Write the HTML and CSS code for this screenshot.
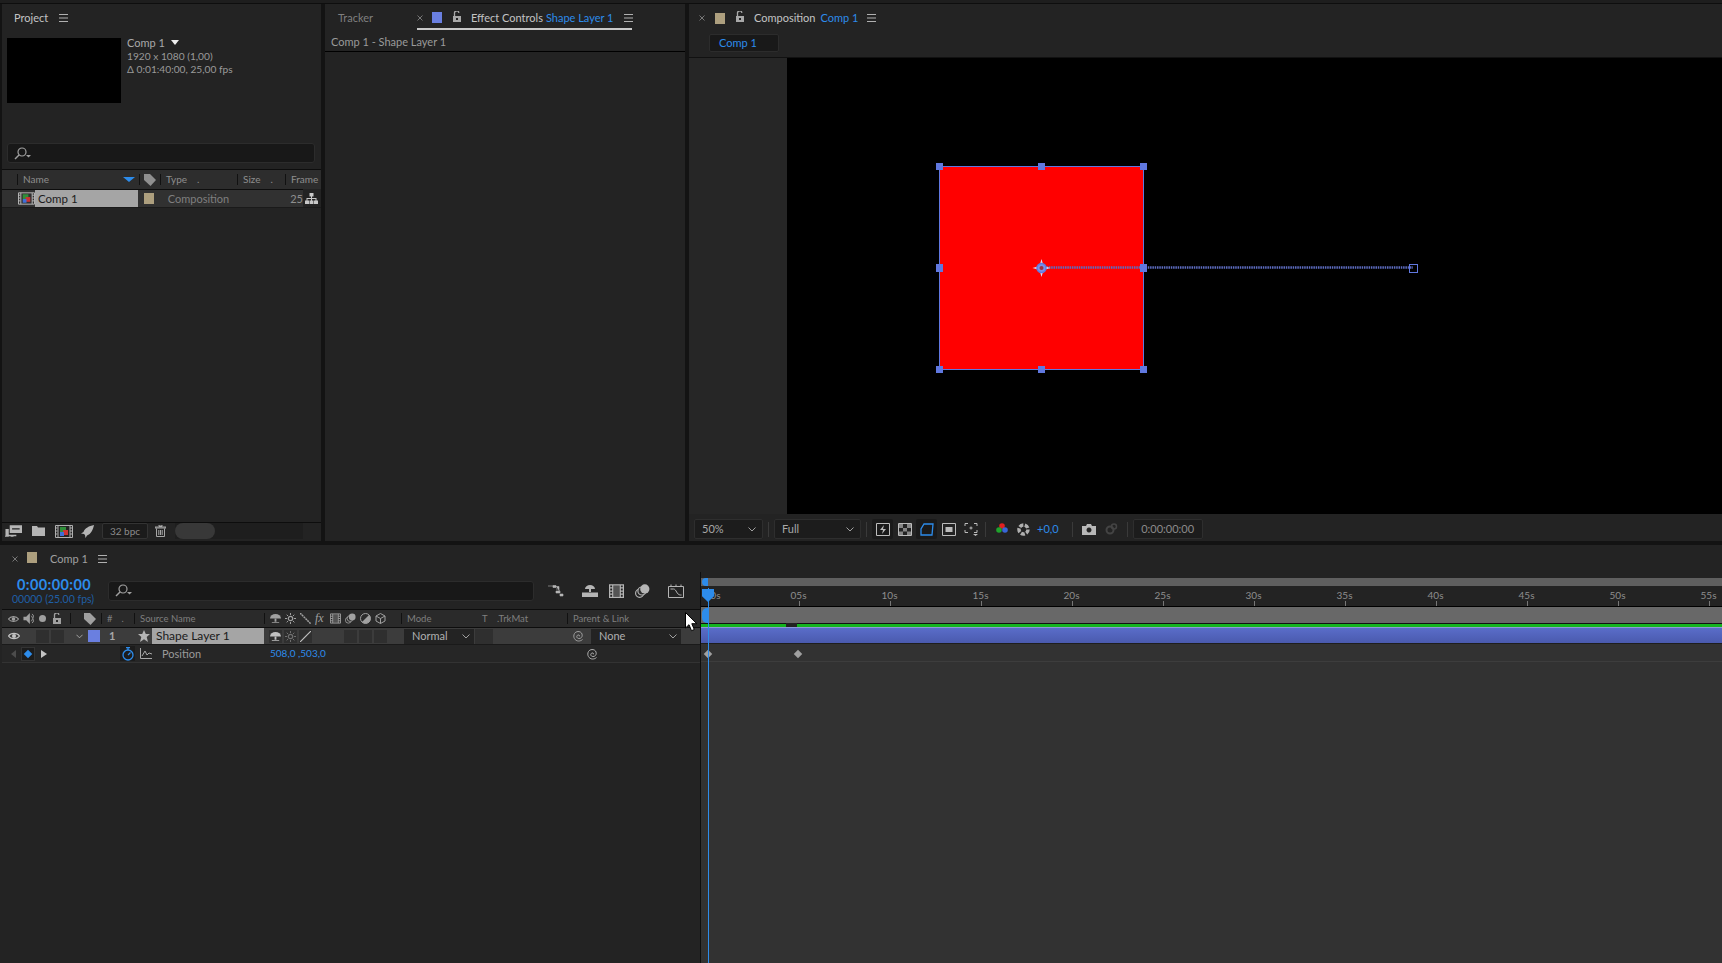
FILE: index.html
```html
<!DOCTYPE html>
<html lang="en">

<head>
  <meta charset="UTF-8" />
  <title>After Effects</title>
  <link rel="stylesheet" href="styles.css">
</head>

<body>
  <svg class="defs">
    <symbol id="i-menu" viewBox="0 0 9 8"><path d="M0 .5h9M0 4h9M0 7.5h9" stroke="currentColor" fill="none" /></symbol>
    <symbol id="i-close" viewBox="0 0 6 6"><path d="M.5.5l5 5M5.5.5l-5 5" stroke="currentColor" fill="none" /></symbol>
    <symbol id="i-lock" viewBox="0 0 10 11"><path d="M1 5h8v6H1z M4 7v2h2V7z" fill="currentColor" fill-rule="evenodd" /><path d="M2.5 5V2.5a2.2 2.2 0 0 1 4.4-.6" stroke="currentColor" stroke-width="1.3" fill="none" /></symbol>
    <symbol id="i-search" viewBox="0 0 18 13"><circle cx="8" cy="5" r="4" stroke="currentColor" fill="none" stroke-width="1.2" /><path d="M5 8l-4 4" stroke="currentColor" stroke-width="1.4" /><path d="M12 8h5l-2.500 2.500z" fill="currentColor" /></symbol>
    <symbol id="i-chev" viewBox="0 0 8 5"><path d="M.5.5L4 4 7.500.5" stroke="currentColor" fill="none" /></symbol>
    <symbol id="i-spiral" viewBox="0 0 12 12"><path d="M6 6.500c1-.5 .5-2-1-1.500-2 .7-1.500 3.500 1 3.500 3 0 4-3 2.500-5.500C7 1 3 1 1.500 3.500-.5 7 2 11 5.500 11c1.500 0 3-.5 4-1.500" stroke="currentColor" fill="none" /></symbol>
    <symbol id="i-comp" viewBox="0 0 18 13"><path d="M.5.500h17v12H.5z M3 .5v12M15 .5v12" stroke="currentColor" fill="none" /><path d="M.5 3h2M.5 6h2M.5 9h2M15 3h2M15 6h2M15 9h2" stroke="currentColor" /><rect x="5" y="2" width="6" height="5" fill="#2f8f3a" /><rect x="8" y="5" width="5" height="5" fill="#c33" /><rect x="5" y="7" width="4" height="4" fill="#3f6fd8" /></symbol>
    <symbol id="i-eye" viewBox="0 0 12 8"><path d="M.5 4C3 .5 9 .5 11.500 4 9 7.500 3 7.500 .5 4z" stroke="currentColor" fill="none" stroke-width="1.200" /><circle cx="6" cy="4" r="2" fill="currentColor" /></symbol>
    <symbol id="i-shy" viewBox="0 0 12 11"><path d="M0 5.500a6 5 0 0 1 12 0z" fill="currentColor" /><path d="M5 5.500h2V9H5z M2 9.500h8v1H2z" fill="currentColor" /></symbol>
    <symbol id="i-sun" viewBox="0 0 11 11"><circle cx="5.500" cy="5.500" r="2.200" stroke="currentColor" fill="none" stroke-width="1.200" /><path d="M5.500 0v2M5.500 9v2M0 5.500h2M9 5.500h2M1.700 1.700l1.400 1.400M8 8l1.400 1.400M9.300 1.700L8 3M3 8l-1.300 1.400" stroke="currentColor" /></symbol>
    <symbol id="i-film" viewBox="0 0 12 11"><path d="M.5.500h11v10H.5z M3 .5v10M9 .5v10M.5 3H3M.5 5.500H3M.5 8H3M9 3h2.500M9 5.500h2.500M9 8h2.500" stroke="currentColor" fill="none" /><rect x="3.500" y="1" width="5" height="9" fill="currentColor" opacity=".35" /></symbol>
    <symbol id="i-discs" viewBox="0 0 13 12"><circle cx="4" cy="8" r="3.500" stroke="currentColor" fill="none" /><circle cx="6" cy="6" r="3.500" stroke="currentColor" fill="#2a2a2a" /><circle cx="8.500" cy="4.200" r="4" fill="currentColor" /></symbol>
  </svg>

  <div class="top-strip"></div>

  <div class="upper">
    <section class="panel project">
      <div class="tabs project-tabs">
        <span class="lit">Project</span>
        <svg class="ico menu"><use href="#i-menu" /></svg>
      </div>
      <div class="proj-info">
        <div class="thumb"></div>
        <div class="meta">
          <div class="meta-name">Comp 1 <span class="meta-caret"></span></div>
          <div>1920 x 1080 (1,00)</div>
          <div>Δ 0:01:40:00, 25,00 fps</div>
        </div>
      </div>
      <div class="search proj-search"><svg class="ico s-ico"><use href="#i-search" /></svg></div>
      <div class="proj-cols">
        <span class="cell c-lead"></span>
        <span class="cell c-name">Name<span class="sort"></span></span>
        <span class="cell c-tag">
          <svg class="tag" viewBox="0 0 12 12"><path d="M0 0h6l6 6-5.500 6L0 6z" fill="currentColor" /></svg>
        </span>
        <span class="cell c-type">Type<i>.</i></span>
        <span class="cell c-size">Size<i>.</i></span>
        <span class="cell c-frame">Frame</span>
      </div>
      <div class="proj-row">
        <div class="proj-row-main">
          <svg class="ico row-comp"><use href="#i-comp" /></svg>
          <span class="row-name">Comp 1</span>
          <span class="swatch tan row-swatch"></span>
          <span class="row-type">Composition</span>
          <span class="row-rate">25</span>
        </div>
        <svg class="row-tree" viewBox="0 0 13 11"><path d="M4.500 0h4v3.500h-4zM0 7.500h4V11H0zM4.500 7.500h4V11h-4zM9 7.500h4V11H9zM6 3.500h1V5h4.500v2.500h-1V6h-3.500v1.500H6V6H2.500v1.500h-1V5H6z" fill="#c8c8c8" /></svg>
      </div>
      <div class="grow"></div>
      <div class="proj-foot">
        <svg class="foot-ico f-interp" viewBox="0 0 18 12"><path d="M5 0h13v8H5z M7.500 3v1.500h8V3z" fill="currentColor" fill-rule="evenodd" /><path d="M.5 4H4v6h8v1.500H.5z M0 11h4v1H0zM6 11h3v1H6z" fill="currentColor" /></svg>
        <svg class="foot-ico f-folder" viewBox="0 0 13 10"><path d="M0 0h5l1 1.500h7V10H0z" fill="currentColor" /></svg>
        <svg class="ico f-comp"><use href="#i-comp" /></svg>
        <svg class="foot-ico f-rocket" viewBox="0 0 13 13"><path d="M13 0C8 1 4 3 2.500 7L0 8.500l3 .5 1 1 .5 3L6 10.500C10 9 12 5 13 0z" fill="currentColor" /></svg>
        <span class="bpc">32 bpc</span>
        <svg class="foot-ico f-trash" viewBox="0 0 11 12"><path d="M0 2h11v1H0zM4 0h3v1.500H4zM1.500 3.500v8h8v-8M3.800 5v5M5.500 5v5M7.200 5v5" stroke="currentColor" stroke-width=".9" fill="none" /></svg>
        <div class="foot-track"><span class="pill"></span></div>
      </div>
    </section>

    <section class="panel effects">
      <div class="tabs fx-tabs">
        <span class="dim tracker">Tracker</span>
        <div class="fx-active">
          <svg class="ico close"><use href="#i-close" /></svg>
          <span class="swatch blue"></span>
          <svg class="ico lock"><use href="#i-lock" /></svg>
          <span class="lit tab-title">Effect Controls</span>
          <span class="link">Shape Layer 1</span>
          <svg class="ico menu"><use href="#i-menu" /></svg>
        </div>
      </div>
      <div class="fx-sub">Comp 1 - Shape Layer 1</div>
    </section>

    <section class="panel comp">
      <div class="tabs comp-tabs">
        <svg class="ico close"><use href="#i-close" /></svg>
        <span class="swatch tan"></span>
        <svg class="ico lock"><use href="#i-lock" /></svg>
        <span class="lit tab-title">Composition</span>
        <span class="link">Comp 1</span>
        <svg class="ico menu"><use href="#i-menu" /></svg>
      </div>
      <div class="comp-subtabs"><span class="comp-subtab link">Comp 1</span></div>
      <div class="viewer-wrap">
        <div class="viewer">
          <svg class="stage" width="935" height="456" viewBox="787 58 935 456">
            <rect x="939.500" y="166.500" width="204" height="203" fill="#ff0000" stroke="#6078e0" />
            <path d="M1042 267.500h371" stroke="#5d6cc0" stroke-width="2.500" stroke-dasharray="1.500 .8" />
            <rect x="1409.500" y="264.500" width="8" height="8" fill="none" stroke="#6078e0" />
            <g fill="#6078e0">
              <rect x="936" y="163" width="7" height="7" /><rect x="1038" y="163" width="7" height="7" /><rect x="1140" y="163" width="7" height="7" />
              <rect x="936" y="264" width="7" height="8" /><rect x="1140" y="264" width="7" height="8" />
              <rect x="936" y="366" width="7" height="7" /><rect x="1038" y="366" width="7" height="7" /><rect x="1140" y="366" width="7" height="7" />
            </g>
            <g fill="none">
              <path d="M1041.500 259l2 7 7 2-7 2-2 7-2-7-7-2 7-2z" fill="#d8dcf5" />
              <circle cx="1041.500" cy="268" r="4.500" fill="#7d8fe8" stroke="#6078e0" stroke-width="1.500" />
              <circle cx="1041.500" cy="268" r="2" fill="#a03040" />
            </g>
          </svg>
        </div>
      </div>
      <div class="comp-toolbar">
        <div class="drop zoom-drop"><span>50%</span><svg class="ico chev"><use href="#i-chev" /></svg></div>
        <span class="tb-sep"></span>
        <div class="drop res-drop"><span>Full</span><svg class="ico chev"><use href="#i-chev" /></svg></div>
        <span class="tb-sep"></span>
        <span class="tb-btn on"><svg viewBox="0 0 14 13"><path d="M.5.500h13v12H.5z" stroke="currentColor" fill="none" /><path d="M8 2L4 7h3l-1 4 4-5H7z" fill="currentColor" /></svg></span>
        <span class="tb-btn"><svg viewBox="0 0 14 13"><path d="M.5.500h13v12H.5z" stroke="currentColor" fill="none" /><path d="M1 1h4v4H1zM9 1h4v4H9zM5 5h4v3.500H5zM1 8.500h4V12H1zM9 8.500h4V12H9z" fill="currentColor" opacity=".65" /></svg></span>
        <span class="tb-btn on accent"><svg viewBox="0 0 14 13"><path d="M4 1h9l-1 11H1V6z" stroke="currentColor" fill="none" stroke-width="1.300" /></svg></span>
        <span class="tb-btn"><svg viewBox="0 0 14 13"><path d="M.5.500h13v12H.5z" stroke="currentColor" fill="none" /><path d="M3.500 4h7v5h-7z" fill="currentColor" /></svg></span>
        <span class="tb-btn"><svg viewBox="0 0 14 13"><path d="M1 3V.5h3M10 .5h3V3M13 7v2.500h-3M4 9.500H1V7M7 3.500v3M5.500 5h3" stroke="currentColor" fill="none" /><path d="M9 11h5l-2.500 2z" fill="currentColor" /></svg></span>
        <span class="tb-sep sep-b"></span>
        <svg class="tb-rgb" viewBox="0 0 12 13"><circle cx="6" cy="3" r="2.800" fill="#e02020" /><circle cx="3" cy="7" r="2.800" fill="#1fa32c" /><circle cx="9" cy="7" r="2.800" fill="#3866d8" /></svg>
        <svg class="tb-shutter" viewBox="0 0 13 13"><circle cx="6.500" cy="6.500" r="4.500" fill="none" stroke="currentColor" stroke-width="3.500" stroke-dasharray="4 1.500" /></svg>
        <span class="link exposure">+0,0</span>
        <span class="tb-sep sep-c"></span>
        <svg class="tb-cam" viewBox="0 0 14 11"><path d="M0 2h4l1-2h4l1 2h4v9H0z M7 3.500a2.500 2.500 0 1 0 .01 0z" fill="currentColor" fill-rule="evenodd" /></svg>
        <svg class="tb-cam2" viewBox="0 0 14 12"><circle cx="6" cy="7" r="3.500" fill="none" stroke="currentColor" stroke-width="2" /><circle cx="10" cy="3.500" r="2.500" fill="none" stroke="currentColor" stroke-width="1.500" /></svg>
        <span class="tb-sep sep-d"></span>
        <span class="time-box">0:00:00:00</span>
      </div>
    </section>
  </div>

  <section class="timeline">
    <div class="tabs tl-tabs">
      <svg class="ico close"><use href="#i-close" /></svg>
      <span class="swatch tan"></span>
      <span class="tl-title">Comp 1</span>
      <svg class="ico menu"><use href="#i-menu" /></svg>
    </div>

    <div class="tl-body">
      <div class="tl-left">
        <div class="tl-tools">
          <div class="timecode">
            <div class="tc-main">0:00:00:00</div>
            <div class="tc-sub">00000 (25.00 fps)</div>
          </div>
          <div class="search tl-search"><svg class="ico s-ico"><use href="#i-search" /></svg></div>
          <div class="tl-btns">
            <svg class="tl-flow" viewBox="0 0 16 12"><path d="M0 1h5M5 .5h3v2H5zM8 1.500h3v5h1M11 4H8M8 6h4v2H8zM12 9h3v2h-3z" stroke="currentColor" fill="currentColor" stroke-width=".6" /></svg>
            <svg class="tl-shy" viewBox="0 0 16 12"><path d="M3 4a5 4 0 0 1 10 0zM7 4h2v3H7zM0 7.500h16V12H0z" fill="currentColor" /></svg>
            <svg class="tl-film"><use href="#i-film" /></svg>
            <svg class="tl-discs"><use href="#i-discs" /></svg>
            <svg class="tl-graph" viewBox="0 0 16 14"><path d="M.5 2.500h15v11H.5zM3 .5v2M8 .5v2M13 .5v2" stroke="currentColor" fill="none" /><path d="M2.500 5h3c3 0 3 6 7 6h1" stroke="currentColor" fill="none" /></svg>
          </div>
        </div>

        <div class="col-head">
          <span class="h-av">
            <svg class="hi-eye"><use href="#i-eye" /></svg>
            <svg class="hi-spk" viewBox="0 0 11 12"><path d="M0 4h3l4-4v12L3 8H0z" fill="currentColor" /><path d="M8.500 3a4 4 0 0 1 0 6M9.500 1a7 7 0 0 1 0 10" stroke="currentColor" fill="none" /></svg>
            <span class="hi-dot"></span>
            <svg class="hi-lock"><use href="#i-lock" /></svg>
          </span>
          <span class="h-tag">
            <svg class="tag" viewBox="0 0 12 12"><path d="M0 0h6l6 6-5.500 6L0 6z" fill="currentColor" /></svg>
          </span>
          <span class="h-num">#<i>.</i></span>
          <span class="h-src">Source Name</span>
          <span class="h-sw">
            <svg><use href="#i-shy" /></svg>
            <svg><use href="#i-sun" /></svg>
            <svg viewBox="0 0 11 11"><path d="M0 0l11 11" stroke="currentColor" stroke-width="1.500" stroke-dasharray="2 .6" /></svg>
            <em>fx</em>
            <svg><use href="#i-film" /></svg>
            <svg><use href="#i-discs" /></svg>
            <svg viewBox="0 0 11 11"><circle cx="5.500" cy="5.500" r="5" fill="none" stroke="currentColor" /><path d="M5.500 .5a5 5 0 0 0 0 10 z" fill="currentColor" transform="rotate(-135 5.500 5.500)" /></svg>
            <svg viewBox="0 0 11 11"><path d="M5.500 .5l4.500 2.500v5l-4.500 2.500L1 8V3zM1 3l4.500 2.500L10 3M5.500 5.500v5" fill="none" stroke="currentColor" /></svg>
          </span>
          <span class="h-mode">Mode</span>
          <span class="h-t">T</span>
          <span class="h-trk">.TrkMat</span>
          <span class="h-parent">Parent &amp; Link</span>
        </div>

        <div class="layer-row">
          <svg class="l-eye"><use href="#i-eye" /></svg>
          <span class="l-box b1"></span>
          <span class="l-box"></span>
          <svg class="ico l-chev"><use href="#i-chev" /></svg>
          <span class="l-swatch"></span>
          <span class="l-num">1</span>
          <svg class="l-star" viewBox="0 0 12 12"><path d="M6 0l1.800 4H12L8.700 6.900 10 12 6 9.200 2 12l1.300-5.100L0 4h4.200z" fill="currentColor" /></svg>
          <span class="l-name">Shape Layer 1</span>
          <span class="l-sw"><svg><use href="#i-shy" /></svg></span>
          <span class="l-sw"><svg class="faint"><use href="#i-sun" /></svg></span>
          <span class="l-sw"><svg viewBox="0 0 11 11"><path d="M0 11L11 0" stroke="currentColor" stroke-width="1.200" /></svg></span>
          <span class="l-sw empty s4"></span>
          <span class="l-sw empty"></span>
          <span class="l-sw empty"></span>
          <span class="l-drop normal">Normal<svg class="ico chev"><use href="#i-chev" /></svg></span>
          <span class="l-trk"></span>
          <svg class="ico l-spiral"><use href="#i-spiral" /></svg>
          <span class="l-drop none">None<svg class="ico chev"><use href="#i-chev" /></svg></span>
        </div>

        <div class="prop-row">
          <span class="tri-l"></span>
          <span class="key-box"><span class="key-diamond"></span></span>
          <span class="tri-r"></span>
          <span class="watch">
            <svg viewBox="0 0 12 14"><circle cx="6" cy="8" r="5" fill="none" stroke="currentColor" stroke-width="1.300" /><path d="M4 .7h4M6 1v2M6 8l2.500-2.500" stroke="currentColor" stroke-width="1.300" fill="none" /></svg>
          </span>
          <svg class="p-graph" viewBox="0 0 12 11"><path d="M.5 0v10.500H12" stroke="currentColor" fill="none" /><path d="M2 8l3-5 2 4 2-2 3 1" stroke="currentColor" fill="none" /></svg>
          <span class="p-name">Position</span>
          <span class="link p-val">508,0 ,503,0</span>
          <svg class="ico p-spiral"><use href="#i-spiral" /></svg>
        </div>
      </div>

      <div class="tl-right">
        <div class="work-bar"><span class="work-cap"></span></div>
        <div class="ruler">
          <span class="zero">00s</span><span>05s</span><span>10s</span><span>15s</span><span>20s</span><span>25s</span>
          <span>30s</span><span>35s</span><span>40s</span><span>45s</span><span>50s</span><span>55s</span>
        </div>
        <div class="range-bar"><span class="range-cap"></span></div>
        <div class="render-line"><span class="render-a"></span><span class="render-gap"></span><span class="render-b"></span></div>
        <div class="layer-bar"></div>
        <div class="key-row"></div>

        <span class="key-mark k0"></span>
        <span class="key-mark k1"></span>
        <span class="time-line"></span>
        <span class="time-head"></span>
      </div>

      <svg class="cursor" viewBox="0 0 12 20"><path d="M.5.500v15.500l3.500-3.300 2.500 6 2.800-1.200-2.500-5.800h5z" fill="#fff" stroke="#000" /></svg>
    </div>
  </section>
</body>

</html>
```

FILE: styles.css
```css
* {
  box-sizing: border-box;
}

html,
body {
  margin: 0;
  height: 963px;
  overflow: hidden;
}

body {
  background: #131313;
  color: #a3a3a3;
  font-family: Lato, "Open Sans", sans-serif;
  font-size: 11px;
  line-height: 1.2;
}

.defs {
  display: none;
}

svg {
  display: block;
  flex: none;
}

i {
  font-style: normal;
}

.top-strip {
  height: 4px;
  background: #1e1e1e;
  border-bottom: 1px solid #0e0e0e;
}

.upper {
  display: flex;
  gap: 4px;
  height: 537px;
  padding-left: 2px;
}

.panel {
  background: #232323;
  display: flex;
  flex-direction: column;
}

.grow {
  flex: 1;
}

/* shared tab bits */
.tabs {
  display: flex;
  align-items: center;
  height: 26px;
  padding-top: 2px;
  flex: none;
  white-space: nowrap;
}

.lit {
  color: #c4c4c4;
}

.dim {
  color: #7f7f7f;
}

.link {
  color: #2d8ceb;
}

.ico {
  color: #b0b0b0;
}

.menu {
  width: 9px;
  height: 8px;
}

.close {
  width: 6px;
  height: 6px;
  color: #777;
}

.lock {
  width: 10px;
  height: 11px;
  color: #a8a8a8;
  margin-top: -3px;
}

.swatch {
  display: block;
  width: 10px;
  height: 11px;
  flex: none;
}

.swatch.tan {
  background: #ad9f7e;
}

.swatch.blue {
  background: #6a7fe0;
}

.search {
  background: #181818;
  border: 1px solid #2c2c2c;
  border-radius: 3px;
  display: flex;
  align-items: center;
}

.s-ico {
  width: 18px;
  height: 13px;
  margin-left: 6px;
  color: #a0a0a0;
}

/* project */
.project {
  width: 319px;
}

.project-tabs {
  padding-left: 12px;
  gap: 11px;
  margin-bottom: 8px;
}

.proj-info {
  display: flex;
  height: 65px;
  padding-left: 5px;
  gap: 6px;
}

.thumb {
  width: 114px;
  height: 65px;
  background: #000;
}

.meta {
  font-size: 10.200px;
  line-height: 13px;
  color: #9a9a9a;
  margin-top: -2px;
}

.meta-name {
  color: #a9a9a9;
  font-size: 11px;
  margin-bottom: 1px;
}

.meta-caret {
  display: inline-block;
  border: 4.500px solid transparent;
  border-top: 5px solid #eee;
  border-bottom: 0;
  margin-left: 3px;
  vertical-align: 2px;
}

.proj-search {
  width: 308px;
  height: 20px;
  margin: 40px 0 6px 5px;
}

.proj-cols {
  display: flex;
  align-items: center;
  height: 20px;
  border-top: 1px solid #0d0d0d;
  background: #2d2d2d;
  font-size: 10px;
  color: #8e8e8e;
}

.cell {
  height: 11px;
  line-height: 11px;
  border-left: 1px solid #111;
  padding-left: 5px;
  flex: none;
  display: flex;
  align-items: center;
  position: relative;
}

.cell i {
  margin-left: 10px;
}

.c-lead {
  width: 15px;
  border: 0;
}

.c-name {
  width: 122px;
}

.sort {
  position: absolute;
  left: 105px;
  top: 3px;
  border: 6px solid transparent;
  border-top: 5px solid #2d8ceb;
  border-bottom: 0;
}

.c-tag {
  width: 21px;
  padding-left: 4px;
}

.tag {
  width: 12px;
  height: 12px;
  color: #8f8f8f;
}

.c-type {
  width: 77px;
}

.c-size {
  width: 48px;
}

.c-frame {
  width: 35px;
  white-space: nowrap;
}

.proj-row {
  display: flex;
  align-items: center;
  height: 19px;
  border-bottom: 1px solid #1a1a1a;
}

.proj-row-main {
  display: flex;
  align-items: center;
  width: 301px;
  height: 18px;
  background: #313131;
  border-top: 1px solid #0d0d0d;
}

.row-comp {
  width: 17px;
  height: 13px;
  margin-left: 16px;
  color: #bdbdbd;
}

.row-name {
  width: 104px;
  height: 17px;
  line-height: 17px;
  background: #a5a5a5;
  color: #1c1c1c;
  padding-left: 3px;
  font-size: 11.500px;
}

.row-swatch {
  margin-left: 6px;
}

.row-type {
  margin-left: 14px;
  width: 124px;
  color: #7f7f7f;
}

.row-rate {
  color: #8e8e8e;
}

.row-tree {
  width: 13px;
  height: 11px;
  margin-left: 2px;
}

.proj-foot {
  display: flex;
  align-items: center;
  height: 19px;
  padding-bottom: 2px;
  border-top: 1px solid #0d0d0d;
  color: #b5b5b5;
}

.foot-ico {
  color: #b5b5b5;
}

.f-interp {
  width: 17px;
  height: 12px;
  margin-left: 3px;
}

.f-folder {
  width: 13px;
  height: 10px;
  margin-left: 10px;
}

.f-comp {
  width: 18px;
  height: 13px;
  margin-left: 10px;
}

.f-rocket {
  width: 13px;
  height: 13px;
  margin-left: 8px;
}

.bpc {
  width: 46px;
  height: 16px;
  line-height: 14px;
  margin-left: 8px;
  border: 1px solid #333;
  border-radius: 2px;
  background: #1b1b1b;
  text-align: center;
  font-size: 10px;
  color: #8b8b8b;
}

.f-trash {
  width: 11px;
  height: 12px;
  margin-left: 7px;
}

.foot-track {
  width: 128px;
  height: 16px;
  margin-left: 9px;
  background: #1e1e1e;
}

.pill {
  display: block;
  width: 40px;
  height: 16px;
  border-radius: 8px;
  background: #383838;
}

/* effect controls */
.effects {
  width: 360px;
}

.fx-tabs {
  padding-left: 13px;
}

.tracker {
  width: 79px;
}

.fx-active {
  display: flex;
  align-items: center;
  height: 24px;
  padding-top: 1px;
  width: 215px;
  border-bottom: 2px solid #c8c8c8;
}

.fx-active .swatch {
  margin-left: 9px;
}

.fx-active .lock,
.comp-tabs .lock {
  margin-left: 10px;
}

.tab-title {
  margin-left: 9px;
  margin-right: 5px;
}

.fx-active .tab-title {
  margin-right: 3px;
}

.fx-active .menu {
  margin-left: 11px;
}

.comp-tabs .menu {
  margin-left: 9px;
}

.fx-sub {
  height: 22px;
  line-height: 23px;
  padding-left: 6px;
  color: #9a9a9a;
  border-bottom: 1px solid #000;
}

/* composition */
.comp {
  flex: 1;
}

.comp-tabs {
  padding-left: 10px;
}

.comp-tabs .swatch {
  margin-left: 10px;
}

.comp-subtabs {
  height: 28px;
  padding: 4px 0 0 20px;
  border-bottom: 1px solid #111;
}

.comp-subtab {
  display: block;
  width: 70px;
  height: 18px;
  line-height: 16px;
  padding-left: 9px;
  border: 1px solid #2c2c2c;
  border-radius: 2px;
  background: #191919;
}

.viewer-wrap {
  height: 456px;
  padding-left: 98px;
  background: #262626;
}

.viewer {
  height: 456px;
  background: #000;
  overflow: hidden;
}

.comp-toolbar {
  display: flex;
  align-items: center;
  height: 27px;
  padding: 3px 0 0 5px;
  color: #b5b5b5;
}

.drop {
  display: flex;
  align-items: center;
  justify-content: space-between;
  height: 20px;
  padding: 0 6px 0 7px;
  background: #1c1c1c;
  border: 1px solid #2e2e2e;
  border-radius: 2px;
  color: #a8a8a8;
}

.chev {
  width: 8px;
  height: 5px;
  color: #a0a0a0;
}

.zoom-drop {
  width: 69px;
}

.res-drop {
  width: 87px;
}

.tb-sep {
  width: 1px;
  height: 15px;
  margin: 0 5px;
  background: #3a3a3a;
}

.tb-btn {
  width: 21px;
  height: 20px;
  margin-right: 1px;
  display: flex;
  align-items: center;
  justify-content: center;
  border-radius: 2px;
  color: #bcbcbc;
}

.tb-btn svg {
  width: 14px;
  height: 13px;
}

.tb-btn.on {
  background: #1a1a1a;
}

.tb-btn.accent {
  color: #2d8ceb;
}

.sep-b {
  margin-left: 3px;
}

.tb-rgb {
  width: 12px;
  height: 13px;
  margin-left: 5px;
}

.tb-shutter {
  width: 13px;
  height: 13px;
  margin-left: 9px;
  color: #b0b0b0;
}

.exposure {
  margin-left: 7px;
}

.sep-c {
  margin-left: 13px;
  margin-right: 9px;
}

.tb-cam {
  width: 14px;
  height: 11px;
  color: #b8b8b8;
}

.tb-cam2 {
  width: 14px;
  height: 12px;
  margin-left: 8px;
  color: #444;
}

.sep-d {
  margin-left: 9px;
  margin-right: 5px;
}

.time-box {
  width: 70px;
  height: 20px;
  line-height: 18px;
  text-align: center;
  background: #1c1c1c;
  border: 1px solid #2e2e2e;
  border-radius: 2px;
  color: #8b8b8b;
}

/* timeline */
.timeline {
  margin-top: 4px;
  height: 418px;
  background: #232323;
  padding-left: 2px;
}

.tl-tabs {
  height: 27px;
  padding: 0 0 0 10px;
}

.tl-tabs .swatch {
  margin-left: 9px;
  margin-top: -3px;
}

.tl-title {
  margin-left: 13px;
  margin-right: 10px;
  color: #a0a0a0;
}

.tl-body {
  display: flex;
  height: 391px;
  position: relative;
}

.tl-left {
  width: 699px;
  border-right: 1px solid #0e0e0e;
  flex: none;
  background: #232323;
}

.tl-tools {
  display: flex;
  align-items: center;
  height: 37px;
}

.timecode {
  width: 106px;
  padding-left: 10px;
  margin-top: 1px;
}

.tc-main {
  color: #2d8ceb;
  font-size: 14.500px;
  font-weight: 700;
  line-height: 16px;
  letter-spacing: .4px;
  padding-left: 5px;
}

.tc-sub {
  color: #1f5fa5;
  font-size: 10.500px;
  line-height: 13px;
}

.tl-search {
  width: 426px;
  height: 20px;
}

.tl-btns {
  display: flex;
  align-items: center;
  color: #b5b5b5;
  margin-left: 14px;
}

.tl-flow {
  width: 16px;
  height: 12px;
}

.tl-shy {
  width: 16px;
  height: 12px;
  margin-left: 18px;
}

.tl-film {
  width: 15px;
  height: 14px;
  margin-left: 11px;
}

.tl-discs {
  width: 15px;
  height: 14px;
  margin-left: 11px;
}

.tl-graph {
  width: 16px;
  height: 14px;
  margin-left: 18px;
}

.col-head {
  display: flex;
  align-items: center;
  height: 19px;
  border-top: 1px solid #0d0d0d;
  border-bottom: 1px solid #0d0d0d;
  background: #2a2a2a;
  font-size: 9.500px;
  color: #7f7f7f;
}

.col-head svg {
  color: #a0a0a0;
}

.col-head>span {
  flex: none;
  display: flex;
  align-items: center;
}

.h-av {
  width: 68px;
  height: 11px;
  padding-left: 6px;
}

.hi-eye {
  width: 11px;
  height: 8px;
}

.hi-spk {
  width: 11px;
  height: 11px;
  margin-left: 4px;
}

.hi-dot {
  display: block;
  width: 7px;
  height: 7px;
  margin-left: 5px;
  border-radius: 50%;
  background: #a0a0a0;
}

.hi-lock {
  width: 10px;
  height: 11px;
  margin-left: 6px;
}

.h-tag {
  width: 31px;
  height: 11px;
  padding-left: 13px;
  border-left: 1px solid #111;
}

.h-num {
  width: 33px;
  height: 11px;
  padding-left: 5px;
  border-left: 1px solid #111;
}

.h-num i {
  margin-left: 9px;
}

.h-src {
  width: 130px;
  height: 11px;
  padding-left: 5px;
  border-left: 1px solid #111;
}

.h-sw {
  width: 137px;
  height: 11px;
  padding-left: 5px;
  gap: 4px;
  border-left: 1px solid #111;
}

.h-sw svg {
  width: 11px;
  height: 11px;
}

.h-sw em {
  width: 11px;
  font-family: "Liberation Serif", serif;
  font-size: 12px;
  color: #a0a0a0;
}

.h-mode {
  width: 81px;
  height: 11px;
  padding-left: 5px;
  border-left: 1px solid #111;
}

.h-t {
  width: 15px;
}

.h-trk {
  width: 70px;
}

.h-parent {
  height: 11px;
  padding-left: 5px;
  border-left: 1px solid #111;
}

.layer-row {
  display: flex;
  align-items: center;
  height: 17px;
  background: #3c3c3c;
  border-bottom: 1px solid #1a1a1a;
  color: #a8a8a8;
}

.l-eye {
  width: 12px;
  height: 8px;
  margin-left: 6px;
  color: #c4c4c4;
}

.l-box {
  width: 13px;
  height: 13px;
  margin-left: 2px;
  background: #2f2f2f;
}

.l-box.b1 {
  margin-left: 16px;
}

.l-chev {
  width: 7px;
  height: 5px;
  margin-left: 12px;
}

.l-swatch {
  display: block;
  width: 12px;
  height: 12px;
  margin-left: 5px;
  background: #6a7fe0;
}

.l-num {
  width: 39px;
  padding-left: 9px;
  font-weight: 700;
}

.l-star {
  width: 12px;
  height: 12px;
  margin-left: -1px;
  color: #b5b5b5;
}

.l-name {
  width: 112px;
  height: 16px;
  line-height: 16px;
  margin-left: 2px;
  margin-right: 3px;
  padding-left: 4px;
  background: #a5a5a5;
  color: #1a1a1a;
  font-size: 12px;
}

.l-sw {
  width: 13px;
  height: 13px;
  margin-left: 2px;
  background: #2f2f2f;
  display: flex;
  align-items: center;
  justify-content: center;
  flex: none;
}

.l-sw:nth-of-type(3) {
  margin-left: 3px;
}

.l-sw svg {
  width: 11px;
  height: 11px;
  color: #c0c0c0;
}

.l-sw svg.faint {
  color: #6f6f6f;
}

.l-sw.s4 {
  margin-left: 32px;
}

.l-drop {
  display: flex;
  align-items: center;
  justify-content: space-between;
  height: 15px;
  padding: 0 4px 0 8px;
  background: #232323;
  color: #b0b0b0;
  flex: none;
}

.normal {
  width: 70px;
  margin-left: 17px;
}

.l-trk {
  width: 18px;
  height: 15px;
  margin-left: 1px;
  padding: 1px;
  background: #2f2f2f;
  flex: none;
}

.l-spiral {
  width: 12px;
  height: 12px;
  margin-left: 80px;
  color: #a0a0a0;
}

.none {
  width: 90px;
  margin-left: 6px;
}

.prop-row {
  display: flex;
  align-items: center;
  height: 18px;
  border-bottom: 1px solid #333;
  background: #262626;
  color: #9a9a9a;
}

.tri-l {
  border: 4px solid transparent;
  border-right: 5px solid #4c4c4c;
  border-left: 0;
  margin-left: 9px;
}

.key-box {
  width: 14px;
  height: 14px;
  margin-left: 5px;
  background: #1c1c1c;
  border: 1px solid #333;
  display: flex;
  align-items: center;
  justify-content: center;
}

.key-diamond {
  display: block;
  width: 6px;
  height: 6px;
  background: #2d8ceb;
  transform: rotate(45deg);
}

.tri-r {
  border: 4px solid transparent;
  border-left: 6px solid #c4c4c4;
  border-right: 0;
  margin-left: 6px;
}

.watch {
  width: 15px;
  height: 15px;
  margin-left: 73px;
  background: #1c1c1c;
  display: flex;
  align-items: center;
  justify-content: center;
  color: #2d8ceb;
}

.watch svg {
  width: 12px;
  height: 14px;
}

.p-graph {
  width: 12px;
  height: 11px;
  margin-left: 5px;
  color: #a8a8a8;
}

.p-name {
  width: 109px;
  margin-left: 10px;
}

.p-val {
  width: 317px;
  margin-left: -1px;
  margin-top: -2px;
  font-size: 10px;
}

.p-spiral {
  width: 12px;
  height: 12px;
}

.tl-right {
  flex: 1;
  position: relative;
  overflow: hidden;
  background: #323232;
}

.work-bar {
  height: 14px;
  background: #232323;
  padding-top: 6px;
  border-bottom: 1px solid #000;
}

.work-bar::before {
  content: "";
  display: block;
  height: 8px;
  background: #5f5f5f;
}

.work-cap,
.range-cap {
  position: absolute;
  left: 1px;
  display: block;
  background: #2d8ceb;
}

.work-cap {
  top: 6px;
  width: 6px;
  height: 8px;
  border-radius: 4px 0 0 4px;
}

.ruler {
  display: flex;
  height: 21px;
  margin-left: -39px;
  background: #232323;
  color: #8e8e8e;
  font-size: 10px;
  border-bottom: 1px solid #000;
}

.ruler span {
  width: 91px;
  flex: none;
  text-align: center;
  padding-top: 3px;
  position: relative;
}

.ruler span.zero {
  text-indent: 10px;
}

.ruler span::after {
  content: "";
  position: absolute;
  left: 46px;
  top: 15px;
  width: 1px;
  height: 5px;
  background: #777;
}

.range-bar {
  height: 16px;
  background: #686868;
}

.range-cap {
  top: 36px;
  width: 6px;
  height: 15px;
  border-radius: 5px 0 0 5px;
}

.render-line {
  display: flex;
  height: 4px;
  background: #111;
}

.render-a {
  width: 85px;
  margin-top: 1px;
  background: #14b31f;
}

.render-gap {
  width: 11px;
  background: #222;
}

.render-b {
  flex: 1;
  margin-top: 1px;
  background: #14b31f;
}

.layer-bar {
  height: 17px;
  background: linear-gradient(#8d99d8 0 1px, #5a6dc9 1px, #4a5aae);
  border-bottom: 1px solid #1e1e1e;
}

.key-row {
  height: 18px;
  border-bottom: 1px solid #3d3d3d;
}

.key-mark {
  position: absolute;
  top: 79px;
  width: 6px;
  height: 6px;
  background: #a0a0a0;
  transform: rotate(45deg);
}

.k0 {
  left: 4px;
}

.k1 {
  left: 94px;
}

.time-line {
  position: absolute;
  left: 7px;
  top: 16px;
  bottom: 0;
  width: 1px;
  background: #2d8ceb;
}

.time-head {
  position: absolute;
  left: 1px;
  top: 17px;
  width: 12px;
  height: 13px;
  background: #2d8ceb;
  clip-path: polygon(0 0, 100% 0, 100% 55%, 50% 100%, 0 55%);
}

.cursor {
  position: absolute;
  left: 683px;
  top: 40px;
  width: 12px;
  height: 20px;
  z-index: 2;
}
```
